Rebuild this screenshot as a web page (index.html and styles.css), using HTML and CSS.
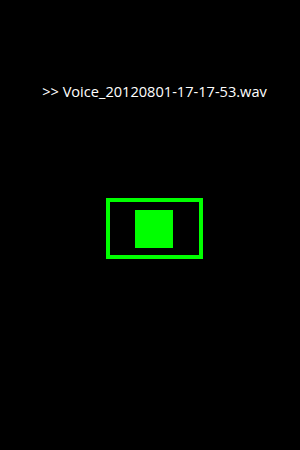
FILE: index.html
```html
<!DOCTYPE html>
<html lang="en">
<head>
    <meta charset="UTF-8">
    <meta name="viewport" content="width=device-width, initial-scale=1.0">
    <title>Recorder</title>
    <link rel="stylesheet" href="styles.css">
</head>
<body>
    <div class="screen">
        <p class="file-name">&gt;&gt; Voice_20120801-17-17-53.wav</p>
        <button class="stop-button" type="button">
            <span class="stop-icon"></span>
        </button>
    </div>
</body>
</html>
```

FILE: styles.css
```css
* {
    box-sizing: border-box;
    margin: 0;
    padding: 0;
}

html, body {
    width: 100%;
    height: 100%;
}

body {
    background: #000000;
    font-family: "Open Sans", "Liberation Sans", sans-serif;
}

.screen {
    display: flex;
    flex-direction: column;
    align-items: center;
    padding: 81px 0 0 9px;
}

.file-name {
    color: #ffffff;
    font-size: 14.6px;
    line-height: 20px;
}

.stop-button {
    display: flex;
    align-items: center;
    justify-content: center;
    width: 97px;
    height: 61px;
    margin-top: 97px;
    margin-left: -1px;
    background: #000000;
    border: 4px solid #00ff00;
}

.stop-icon {
    display: block;
    width: 38px;
    height: 38px;
    background: #00ff00;
}
```
